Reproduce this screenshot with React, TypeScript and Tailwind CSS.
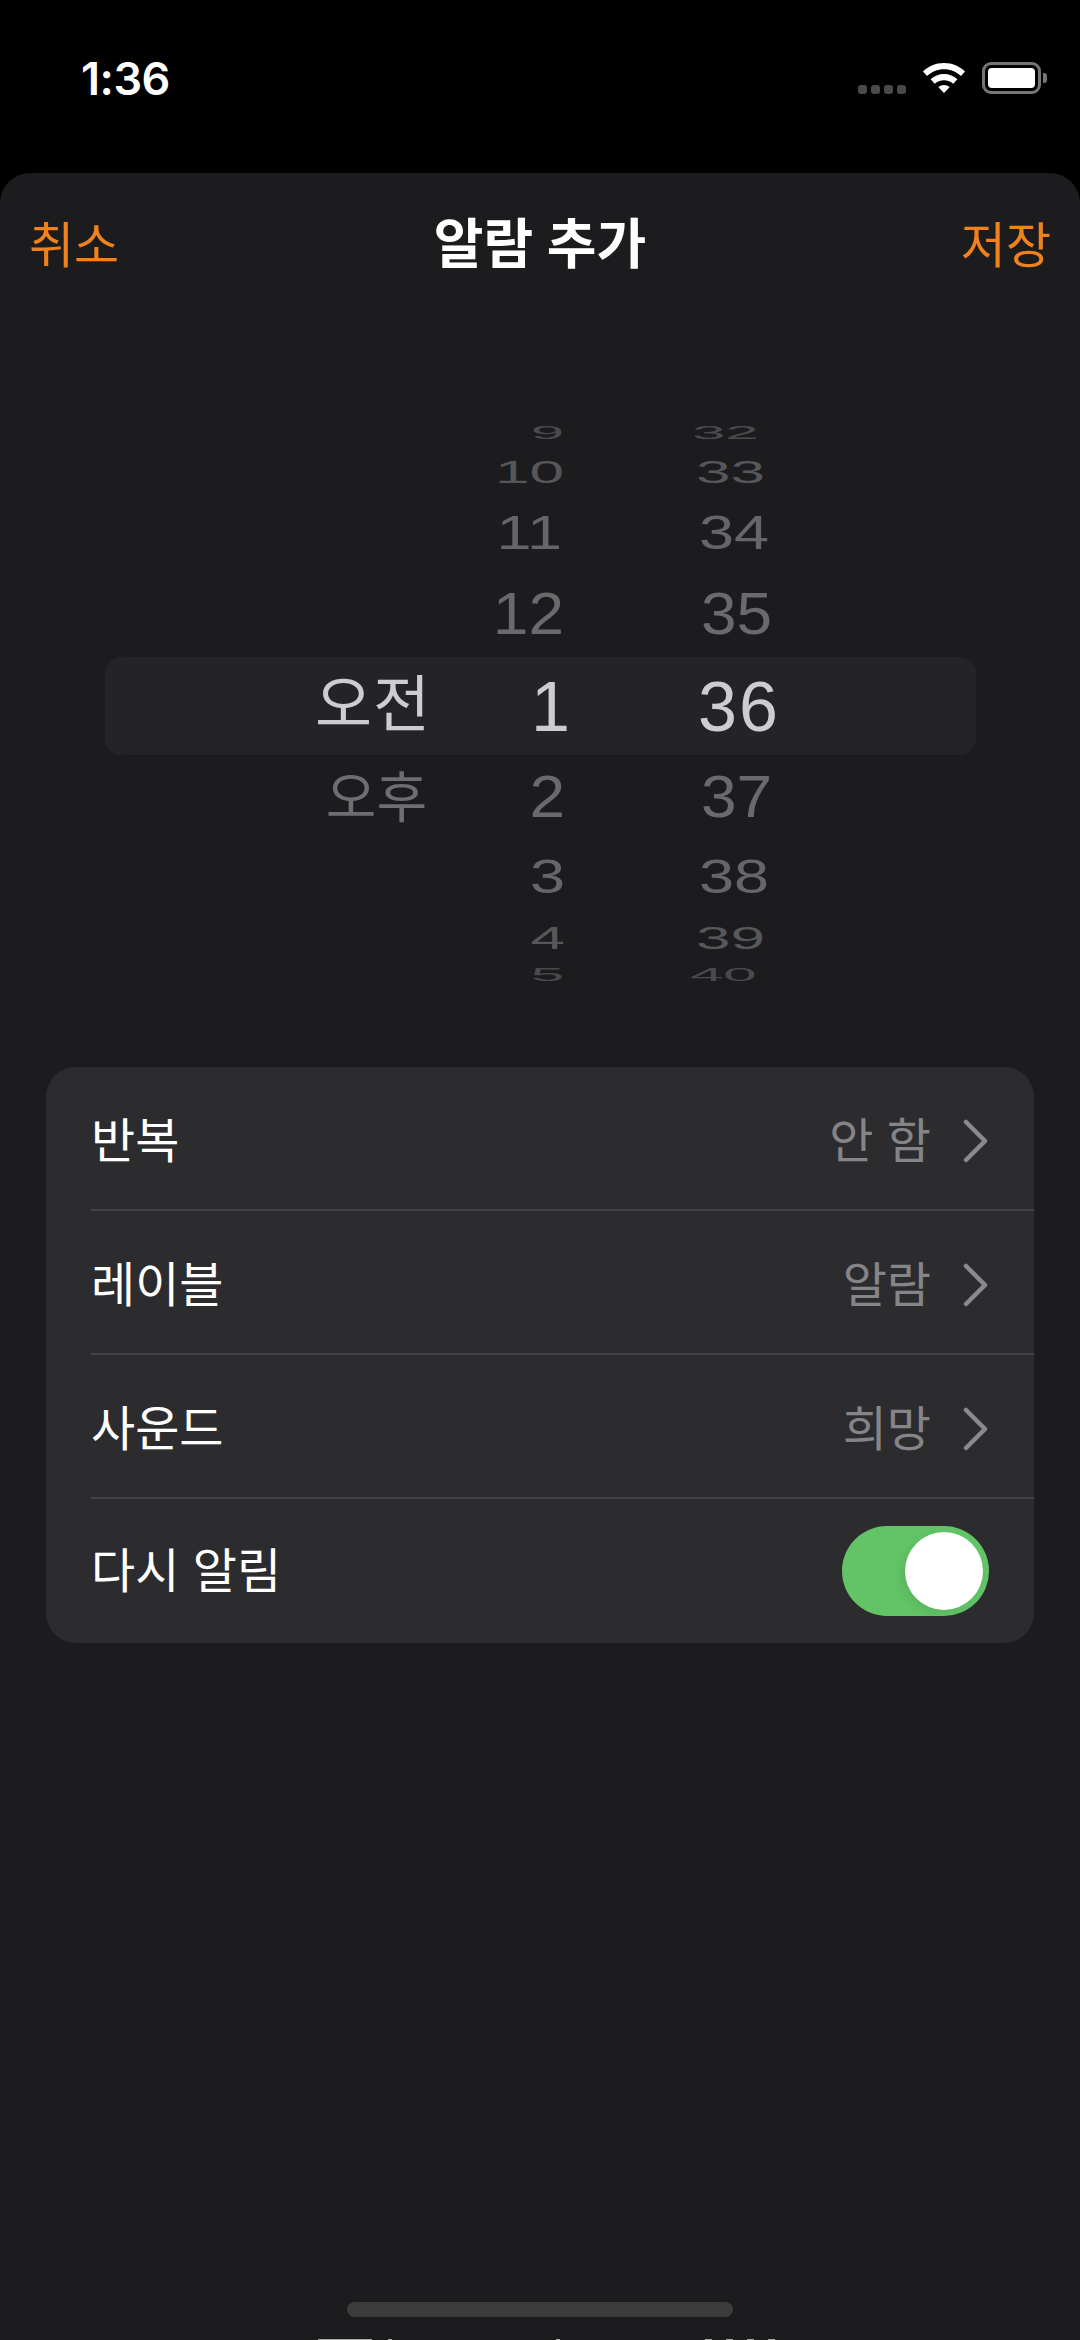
import React from 'react'

const sans = "font-['Inter','Noto_Sans_CJK_KR',sans-serif]"

// cylinder rows of the time picker: every row has its own height, offset and squish
const far = 'text-[60px] scale-y-[0.3] text-[#4a4a4c]'
const mid = 'text-[62px] scale-y-[0.52] text-[#575759]'
const near = 'text-[63px] scale-y-[0.75] text-[#666668]'
const next = 'text-[64px] scale-y-[0.92] text-[#6a6a6c]'

const above = [
  { h: 'h-[22px]', cls: far, hour: '9', hourShift: 'pr-[1px]', minute: '32', minShift: 'pl-[12px]' },
  { h: 'h-[56px]', cls: mid, hour: '10', hourShift: 'pr-[1px]', minute: '33', minShift: 'pl-[16px]' },
  { h: 'h-[66px]', cls: near, hour: '11', hourShift: 'pr-[3px]', minute: '34', minShift: 'pl-[19px]' },
  { h: 'h-[96px]', cls: next, hour: '12', hourShift: 'pr-[1px] pt-[2px]', minute: '35', minShift: 'pl-[21px] pt-[2px]' },
]
const below = [
  { h: 'h-[98px]', cls: next, hour: '2', hourShift: 'pt-[2px]', minute: '37', minShift: 'pl-[21px] pt-[2px]' },
  { h: 'h-[64px]', cls: near, hour: '3', hourShift: '', minute: '38', minShift: 'pl-[19px]' },
  { h: 'h-[60px]', cls: mid, hour: '4', hourShift: '', minute: '39', minShift: 'pl-[16px]' },
  { h: 'h-[14px]', cls: far, hour: '5', hourShift: 'pr-[1px]', minute: '40', minShift: 'pl-[10px]' },
]

const rows = [
  { label: '반복', value: '안 함' },
  { label: '레이블', value: '알람' },
  { label: '사운드', value: '희망' },
]

function Chevron() {
  return (
    <svg width="28" height="44" viewBox="0 0 28 44" fill="none" className="shrink-0">
      <path d="M5 3 L24 22 L5 41" stroke="#8a8a8d" strokeWidth="4.5" strokeLinecap="round" strokeLinejoin="round" />
    </svg>
  )
}

function Wheel() {
  const digits = "font-['Liberation_Sans',sans-serif] leading-none whitespace-nowrap"
  return (
    <div className="mt-[141px] relative h-[560px]">
      {/* selection band sits behind the wheels */}
      <div className="absolute left-[105px] top-[235px] w-[871px] h-[98px] rounded-[16px] bg-[#242426]" />
      <div className="relative flex h-full">
        <div className="w-[445px] flex flex-col items-end pr-[14px] pt-[240px]">
          <div className={`h-[86px] flex items-center text-[62px] tracking-[1px] leading-none text-[#cdcdcf] ${sans}`}>오전</div>
          <div className={`h-[98px] flex items-center pr-[4px] text-[55px] leading-none text-[#6e6e70] ${sans}`}>오후</div>
        </div>
        <div className="w-[120px] flex flex-col items-end">
          {above.map((r) => (
            <div key={r.hour} className={`${r.h} flex items-center ${r.hourShift}`}>
              <span className={`block ${digits} ${r.cls}`}>{r.hour}</span>
            </div>
          ))}
          <div className="h-[86px] flex items-center mr-[-5px] pt-[5px]">
            <span className={`block ${digits} text-[70px] text-[#cdcdcf]`}>1</span>
          </div>
          {below.map((r) => (
            <div key={r.hour} className={`${r.h} flex items-center ${r.hourShift}`}>
              <span className={`block ${digits} ${r.cls}`}>{r.hour}</span>
            </div>
          ))}
        </div>
        <div className="ml-[115px] w-[200px] flex flex-col">
          {above.map((r) => (
            <div key={r.minute} className={`${r.h} flex items-center ${r.minShift}`}>
              <span className={`block ${digits} ${r.cls}`}>{r.minute}</span>
            </div>
          ))}
          <div className="h-[86px] flex items-center pl-[18px] pt-[5px]">
            <span className={`block ${digits} text-[70px] tracking-[2px] text-[#cdcdcf]`}>36</span>
          </div>
          {below.map((r) => (
            <div key={r.minute} className={`${r.h} flex items-center ${r.minShift}`}>
              <span className={`block ${digits} ${r.cls}`}>{r.minute}</span>
            </div>
          ))}
        </div>
      </div>
    </div>
  )
}

export default function App() {
  return (
    <div className={`w-[1080px] h-[2340px] overflow-hidden bg-black flex flex-col ${sans}`}>
      {/* status bar */}
      <div className="h-[173px] shrink-0 flex items-start justify-between pl-[81px] pr-[33px] pt-[53px]">
        <span className="text-[45px] leading-[52px] font-semibold text-white tracking-[-0.5px]">1:36</span>
        <div className="flex items-start gap-[16px] pt-[9px]">
          <div className="flex gap-[4px] pt-[23px]">
            <div className="w-[9px] h-[9px] rounded-[3px] bg-[#4a4a4a]" />
            <div className="w-[9px] h-[9px] rounded-[3px] bg-[#4a4a4a]" />
            <div className="w-[9px] h-[9px] rounded-[3px] bg-[#4a4a4a]" />
            <div className="w-[9px] h-[9px] rounded-[3px] bg-[#4a4a4a]" />
          </div>
          <svg width="44" height="32" viewBox="0 0 44 32">
            <path d="M22 1 C13.5 1 6.5 4.2 1 9.4 L5 14 C9.6 9.8 15.4 7.2 22 7.2 C28.6 7.2 34.4 9.8 39 14 L43 9.4 C37.5 4.2 30.5 1 22 1 Z" fill="#fff" />
            <path d="M22 12 C16.8 12 12.2 14 8.6 17.2 L12.8 21.8 C15.2 19.6 18.4 18.2 22 18.2 C25.6 18.2 28.8 19.6 31.2 21.8 L35.4 17.2 C31.8 14 27.2 12 22 12 Z" fill="#fff" />
            <path d="M22 23 C19.8 23 18 23.8 16.4 25.2 L22 31 L27.6 25.2 C26 23.8 24.2 23 22 23 Z" fill="#fff" />
          </svg>
          <div className="flex items-center">
            <div className="w-[59px] h-[32px] rounded-[9px] border-[3px] border-[#757575] p-[3px]">
              <div className="w-full h-full rounded-[4px] bg-white" />
            </div>
            <div className="w-[4px] h-[10px] rounded-r-[3px] bg-[#757575] ml-[2px]" />
          </div>
        </div>
      </div>

      {/* sheet */}
      <div className="relative flex-1 rounded-t-[30px] bg-[#1c1c1e] flex flex-col">
        <div className="h-[72px] mt-[36px] px-[29px] flex items-center justify-between">
          <span className="text-[49px] leading-none text-[#f0821e]">취소</span>
          <span className="text-[54px] leading-none font-semibold text-white">알람 추가</span>
          <span className="text-[49px] leading-none text-[#f0821e]">저장</span>
        </div>

        <Wheel />

        {/* options */}
        <div className="mt-[85px] mx-[46px] rounded-[30px] bg-[#2c2c2e]">
          {rows.map((r) => (
            <div key={r.label} className="h-[144px] pl-[45px] flex flex-col">
              <div className="flex-1 flex items-center justify-between pr-[45px] pt-[5px]">
                <span className="text-[48px] leading-none text-white">{r.label}</span>
                <div className="flex items-center gap-[30px]">
                  <span className="text-[48px] leading-none text-[#858588]">{r.value}</span>
                  <Chevron />
                </div>
              </div>
              <div className="h-[2px] bg-[#434345]" />
            </div>
          ))}
          <div className="h-[144px] px-[45px] flex items-center justify-between">
            <span className="text-[48px] leading-none text-white">다시 알림</span>
            <div className="w-[147px] h-[90px] rounded-full bg-[#62c466] flex items-center justify-end pr-[6px]">
              <div className="w-[78px] h-[78px] rounded-full bg-white shadow-[-4px_3px_10px_rgba(0,0,0,0.08)]" />
            </div>
          </div>
        </div>

        {/* home indicator */}
        <div className="absolute left-[347px] top-[2129px] w-[386px] h-[15px] rounded-full bg-[#3c3c3c]" />

        {/* tops of clipped text at the very bottom edge */}
        <div className="absolute left-[318px] bottom-0 h-[1px] flex">
          <div className="w-[54px] bg-[#aaaaaa]" />
          <div className="ml-[16px] w-[4px] bg-[#aaaaaa]" />
          <div className="ml-[164px] w-[4px] bg-[#aaaaaa]" />
          <div className="ml-[145px] w-[7px] bg-[#aaaaaa]" />
          <div className="ml-[14px] w-[7px] bg-[#aaaaaa]" />
          <div className="ml-[14px] w-[7px] bg-[#aaaaaa]" />
          <div className="ml-[14px] w-[7px] bg-[#aaaaaa]" />
        </div>
      </div>
    </div>
  )
}
